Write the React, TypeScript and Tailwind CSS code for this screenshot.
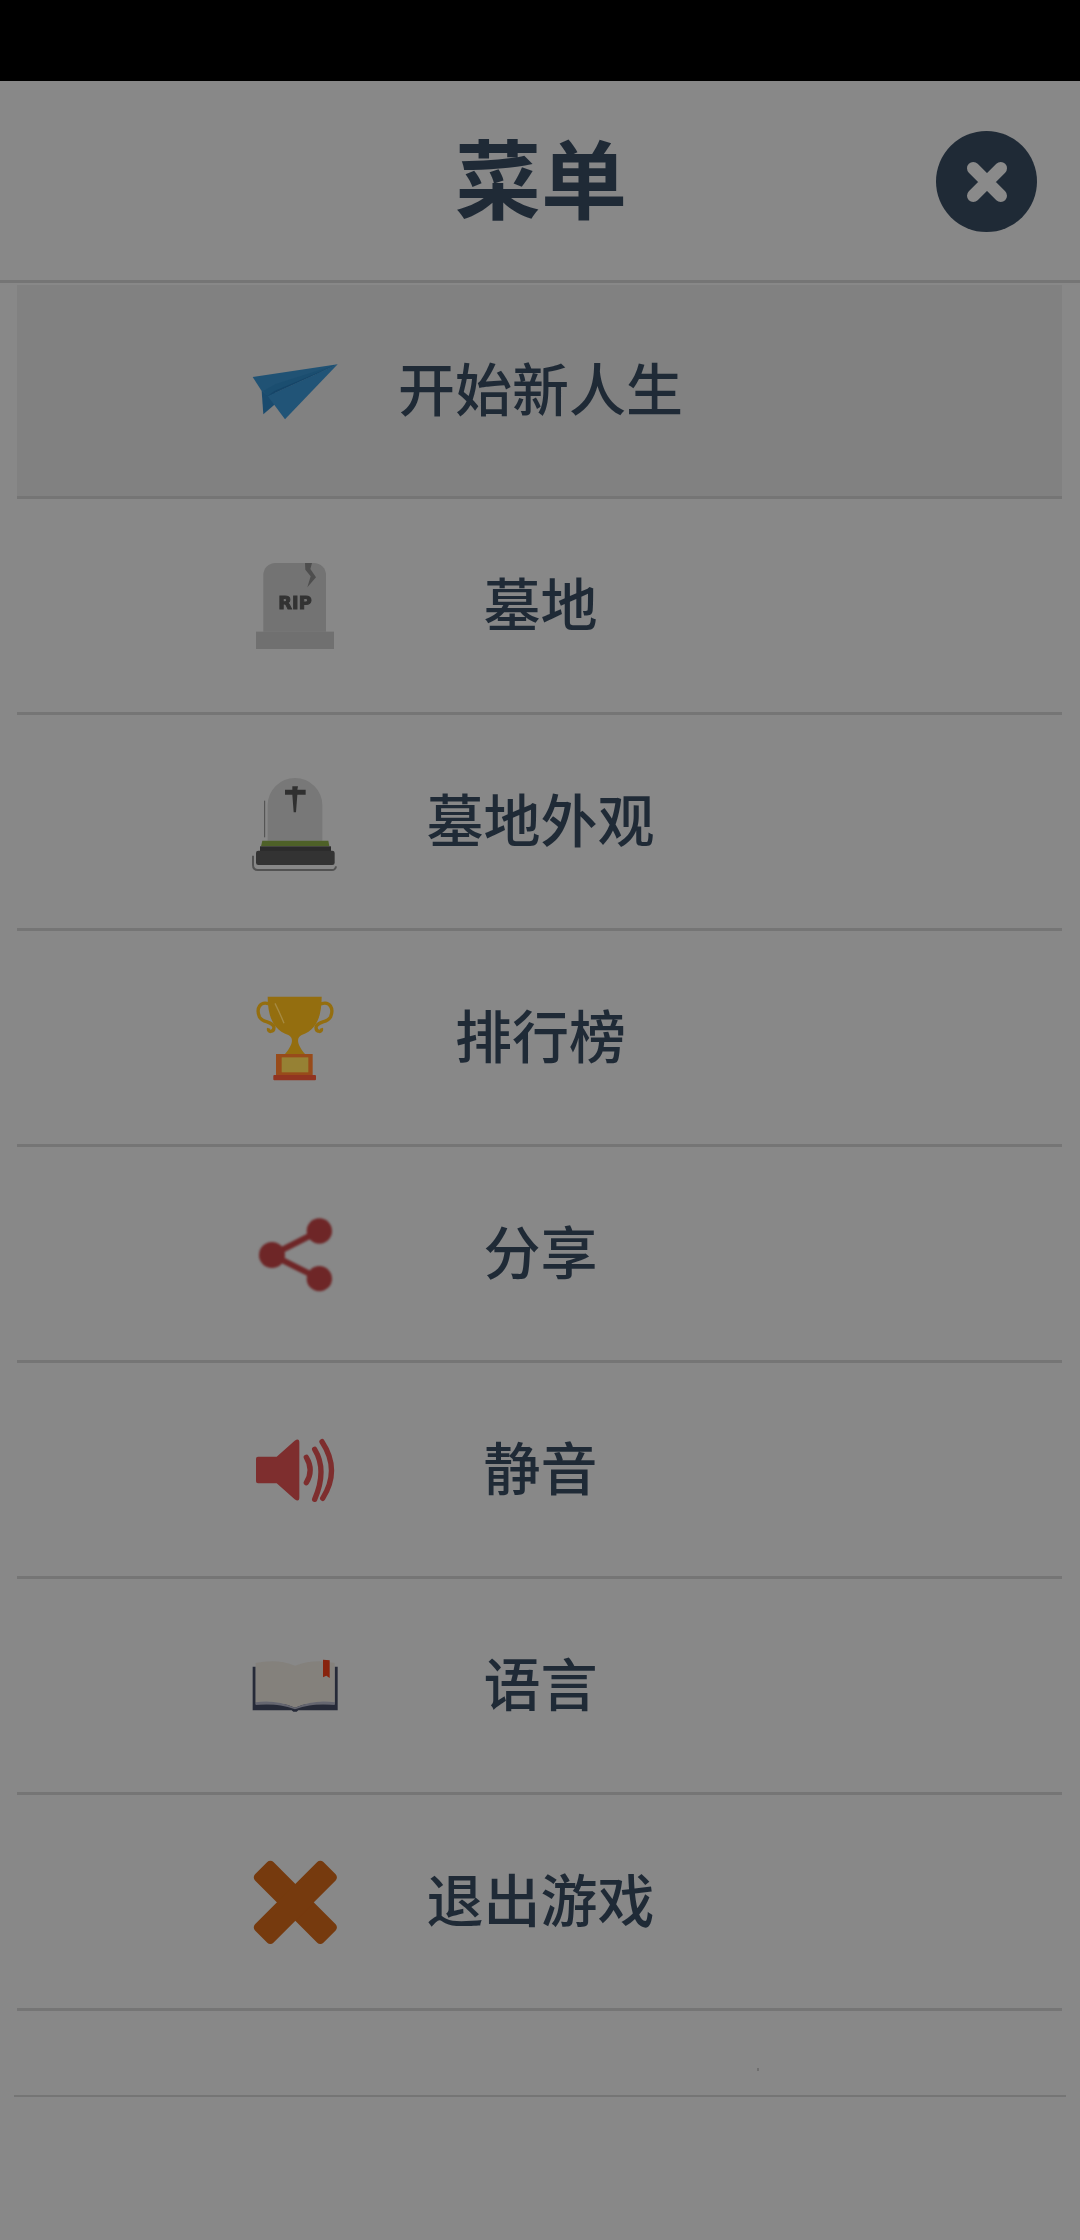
import React from 'react';

// Icons are drawn at 3x in a viewBox, displayed at 1x.
function PlaneIcon() {
    return (
        <svg viewBox="0 0 420 300" className="w-[140px] h-[100px] blur-[0.4px]">
            <polygon points="95,150 135,150 135,190 100,220" fill="#1a4b6e" />
            <polygon points="68,108 323,70 113,165 95,150" fill="#205274" />
            <polygon points="113,165 323,70 165,235" fill="#215477" />
            <polygon points="113,165 323,70 135,130 100,150" fill="#184a6e" opacity="0.55" />
            <polygon points="113,165 323,70 133,150" fill="#164568" />
        </svg>
    );
}

function RipIcon() {
    return (
        <svg viewBox="0 0 420 360" className="w-[140px] h-[120px] blur-[0.4px]">
            <path d="M100 278V108a36 36 0 0 1 36-36H252a36 36 0 0 1 36 36V278Z" fill="#737373" />
            <rect x="78" y="278" width="234" height="52" fill="#707070" />
            <polygon points="225,72 246,72 241,90 258,115 232,145 242,112 226,92" fill="#4e4e4e" />
            <text x="145" y="210" textLength="100" lengthAdjust="spacingAndGlyphs" fontFamily="'DejaVu Sans', sans-serif" fontWeight="700" fontSize="54" fill="#333333" stroke="#333333" strokeWidth="3">RIP</text>
        </svg>
    );
}

function GraveIcon() {
    return (
        <svg viewBox="0 0 420 360" className="w-[140px] h-[120px] blur-[0.4px]">
            <path d="M113 245V138a82 81 0 0 1 164 0V245Z" fill="#787878" />
            <path d="M104 125V235" stroke="#4d4d4d" strokeWidth="3" fill="none" />
            <polygon points="187,82 204,82 202,92 227,92 227,107 202,107 198,160 191,160 187,107 165,107 165,92 187,92" fill="#303030" />
            <polygon points="97,245 295,245 298,262 93,262" fill="#4e6128" />
            <rect x="90" y="262" width="213" height="14" fill="#2b2b2b" />
            <rect x="78" y="275" width="236" height="43" rx="7" fill="#333333" />
            <path d="M69 290V318Q69 333 84 333H306Q316 333 318 322" stroke="#525252" strokeWidth="6" fill="none" />
        </svg>
    );
}

function TrophyIcon() {
    return (
        <svg viewBox="0 0 420 330" className="w-[140px] h-[110px] blur-[0.4px]">
            <path d="M118 72C90 62 78 85 88 110C98 130 128 122 132 142C132 158 112 158 116 145" stroke="#946e0f" strokeWidth="10" fill="none" />
            <path d="M272 72C300 62 312 85 302 110C292 130 262 122 258 142C258 158 278 158 274 145" stroke="#946e0f" strokeWidth="10" fill="none" />
            <path d="M113 50H275C275 105 262 150 215 165C200 172 198 190 225 222H165C192 190 190 172 175 165C128 150 113 105 113 50Z" fill="#946e0f" />
            <path d="M135 70Q150 100 162 130" stroke="#a68a42" strokeWidth="4" fill="none" />
            <rect x="138" y="222" width="110" height="64" fill="#984b1a" />
            <rect x="155" y="232" width="80" height="45" fill="#968134" />
            <rect x="130" y="285" width="128" height="16" rx="3" fill="#913420" />
        </svg>
    );
}

function ShareIcon() {
    return (
        <svg viewBox="0 0 420 330" className="w-[140px] h-[110px] blur-[1px]">
            <path d="M268 90L126 162L268 233" stroke="#6e2627" strokeWidth="18" fill="none" />
            <circle cx="268" cy="90" r="38" fill="#6e2627" />
            <circle cx="126" cy="162" r="39" fill="#6e2627" />
            <circle cx="268" cy="233" r="38" fill="#6e2627" />
        </svg>
    );
}

function SpeakerIcon() {
    return (
        <svg viewBox="0 0 420 300" className="w-[140px] h-[100px] blur-[0.4px]">
            <path d="M84 110H140L194 62Q208 52 208 68V232Q208 248 194 238L140 190H84Q78 190 78 184V116Q78 110 84 110Z" fill="#7e2e2e" />
            <g stroke="#7e2e2e" strokeWidth="16" strokeLinecap="round" fill="none">
                <path d="M229 112Q252 150 229 188" />
                <path d="M254 88Q292 150 254 238" />
                <path d="M276 65Q332 150 278 235" />
            </g>
        </svg>
    );
}

function BookIcon() {
    return (
        <svg viewBox="0 0 420 300" className="w-[140px] h-[100px] blur-[0.5px]">
            <path d="M68 83H77V196H314V83H323V214H205L200 218H190L185 214H68Z" fill="#262a38" />
            <path d="M77 72Q140 58 195 80Q255 58 314 72V190Q255 180 195 206Q135 180 77 190Z" fill="#84817c" />
            <path d="M77 190Q135 180 195 206Q255 180 314 190V198Q255 190 195 211Q135 190 77 198Z" fill="#656670" />
            <polygon points="279,62 299,64 299,117 289,110 279,115" fill="#88230d" />
        </svg>
    );
}

function CrossIcon() {
    return (
        <svg viewBox="0 0 420 330" className="w-[140px] h-[110px]">
            <g fill="#763a0e">
                <rect x="51" y="118" width="290" height="78" rx="13" transform="rotate(45 196 157)" />
                <rect x="51" y="118" width="290" height="78" rx="13" transform="rotate(-45 196 157)" />
            </g>
        </svg>
    );
}

const rows = [
    { label: '开始新人生', icon: <PlaneIcon />, shift: '' },
    { label: '墓地', icon: <RipIcon />, shift: 'mb-[13px]' },
    { label: '墓地外观', icon: <GraveIcon />, shift: 'mb-[5px]' },
    { label: '排行榜', icon: <TrophyIcon />, shift: 'mb-[6px]' },
    { label: '分享', icon: <ShareIcon />, shift: 'mt-[5px]' },
    { label: '静音', icon: <SpeakerIcon />, shift: '' },
    { label: '语言', icon: <BookIcon />, shift: 'mt-[7px]' },
    { label: '退出游戏', icon: <CrossIcon />, shift: 'mt-[7px]' },
];

export default function App() {
    return (
        <div className="w-[1080px] h-[2240px] bg-[#888888] overflow-hidden font-['Noto_Sans_CJK_SC','Liberation_Sans',sans-serif] text-[#1f2a36]">
            {/* Status bar */}
            <div className="h-[81px] bg-black" />

            {/* Header */}
            <div className="grid items-center h-[202px] border-b-[3px] border-[#757575]">
                <h1 className="col-start-1 row-start-1 justify-self-center text-[86px] leading-none font-bold mb-[10px] ml-[2px]">
                    菜单
                </h1>
                <button className="col-start-1 row-start-1 justify-self-end mr-[43px] mt-[2px] w-[101px] h-[101px] rounded-full bg-[#1f2a36] flex items-center justify-center blur-[0.7px]">
                    <svg viewBox="0 0 40 40" className="w-[50px] h-[50px]">
                        <path d="M9 9L31 31M31 9L9 31" stroke="#8a8a8a" strokeWidth="10" strokeLinecap="round" />
                    </svg>
                </button>
            </div>

            {/* Menu rows */}
            <div className="pt-[2px] pl-[17px] pr-[18px]">
                {rows.map((row, i) => (
                    <div
                        key={row.label}
                        className={`grid items-center border-b-[3px] border-[#757575] ${i === 0 ? 'h-[214px] bg-[#818181]' : 'h-[216px]'}`}
                    >
                        <div className={`col-start-1 row-start-1 justify-self-start ml-[213px] flex items-center ${row.shift}`}>
                            {row.icon}
                        </div>
                        <span className="col-start-1 row-start-1 justify-self-center text-[57px] leading-none font-medium mb-[8px] ml-[2px]">
                            {row.label}
                        </span>
                    </div>
                ))}

                <div className="relative h-[84px]">
                    <span className="absolute left-[740px] top-[57px] w-[2px] h-[3px] bg-[#707070]" />
                </div>
            </div>

            <div className="mx-[14px] h-[2px] bg-[#757575]" />
        </div>
    );
}
